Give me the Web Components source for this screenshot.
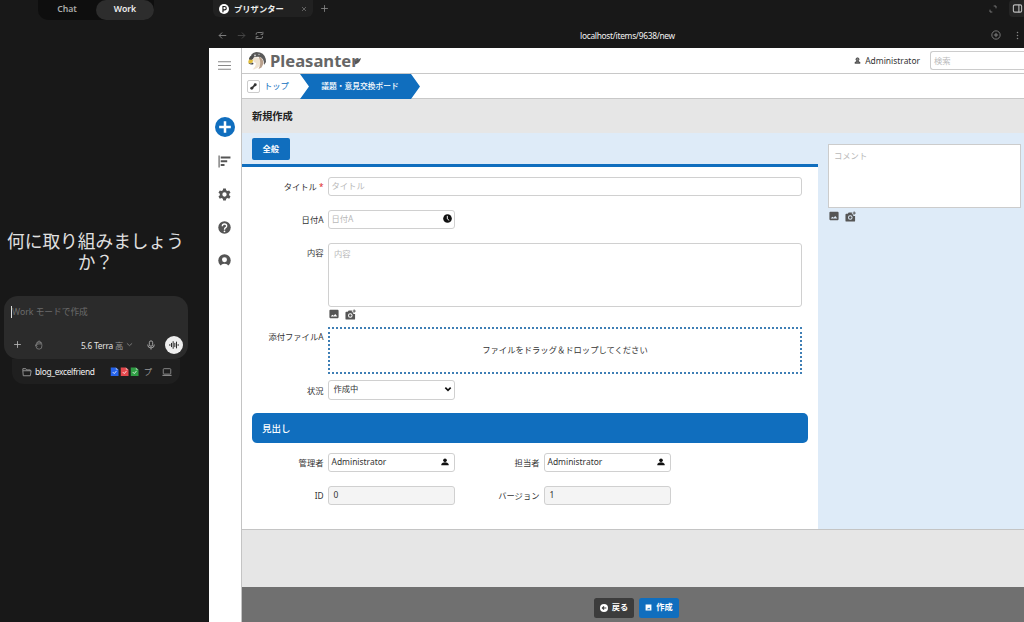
<!DOCTYPE html>
<html lang="ja">
<head>
<meta charset="utf-8">
<title>プリザンター</title>
<style>
  :root {
    --blue: #106ebe;
    --dark: #181818;
    --pale: #deebf8;
    --grey: #e6e6e6;
  }
  body {
    margin: 0;
    width: 1024px;
    height: 622px;
    overflow: hidden;
    display: flex;
    background: var(--dark);
    font-family: "Noto Sans", "Noto Sans CJK JP", sans-serif;
    font-size: 8.3px;
    color: #333;
  }
</style>
</head>
<body>
<chat-panel></chat-panel>
<browser-window>
  <side-nav slot="nav"></side-nav>
  <page-header></page-header>
  <record-editor></record-editor>
  <command-bar></command-bar>
</browser-window>

<script>
// every icon is drawn in a 24x24 box
const ICONS = {
  plus: '<path d="M12 3v18M3 12h18" fill="none" stroke="currentColor" stroke-width="2.2"/>',
  close: '<path d="M4 4l16 16M20 4L4 20" fill="none" stroke="currentColor" stroke-width="2.5"/>',
  back: '<path d="M22 12H3M11 4l-8 8 8 8" fill="none" stroke="currentColor" stroke-width="2.4"/>',
  forward: '<path d="M2 12h19M13 4l8 8-8 8" fill="none" stroke="currentColor" stroke-width="2.4"/>',
  reload: '<path d="M3 10V8q0-4 4-4h12M20 14v2q0 4-4 4H4M15 9h6V2M9 15H3v7" fill="none" stroke="currentColor" stroke-width="2.3"/>',
  hand: '<path d="M6 13V8q0-2 1.500-2T9 8V5q0-2 1.500-2T12 5V4.500q0-2 1.500-2T15 5v2q0-1.500 1.500-1.500T18 7l1 6q1 9-6.500 9T5 16l-2-4q1-2 3 1l2 3M9 8v4M12 5v6M15 6v5" fill="none" stroke="currentColor" stroke-width="1.800"/>',
  down: '<path d="M3 8l9 8 9-8" fill="none" stroke="currentColor" stroke-width="2.8"/>',
  select: '<path d="M4 8l8 8 8-8" fill="none" stroke="currentColor" stroke-width="5"/>',
  mic: '<rect x="8" y="2" width="8" height="13" rx="4" fill="none" stroke="currentColor" stroke-width="2"/><path d="M4 11q0 8 8 8t8-8M12 19v4" fill="none" stroke="currentColor" stroke-width="2"/>',
  wave: '<path d="M2 10v4M6 7v10M10 3v18M14 7v10M18 4v16M22 10v4" fill="none" stroke="currentColor" stroke-width="2.300"/>',
  folder: '<path d="M2 9V4h7l2 3h9v3M2 9h20l-2 12H3z" fill="none" stroke="currentColor" stroke-width="2.200" stroke-linejoin="round"/>',
  laptop: '<rect x="3" y="4" width="18" height="13" rx="2" fill="none" stroke="currentColor" stroke-width="2"/><path d="M1 20h22" stroke="currentColor" stroke-width="2.500"/>',
  doc: '<path d="M2 1h13l7 6v16H2z" fill="currentColor"/><path d="M15 1v6h7z" fill="#fff" opacity=".5"/><path d="M7 13l4 4 6-7" fill="none" stroke="#fff" stroke-width="2.500" opacity=".8"/>',
  expand: '<path d="M14 3h7v7M10 21H3v-7" fill="none" stroke="currentColor" stroke-width="2.400"/>',
  panel: '<rect x="3" y="4" width="18" height="16" rx="3" fill="none" stroke="currentColor" stroke-width="2.400"/><path d="M15 4v16" stroke="currentColor" stroke-width="2.400"/>',
  addCircle: '<circle cx="12" cy="12" r="10" fill="none" stroke="currentColor" stroke-width="2"/><path d="M12 7v10M7 12h10" stroke="currentColor" stroke-width="2.200"/>',
  dots: '<circle cx="12" cy="4" r="2" fill="currentColor"/><circle cx="12" cy="12" r="2" fill="currentColor"/><circle cx="12" cy="20" r="2" fill="currentColor"/>',
  menu: '<path d="M0 5h24M0 12h24M0 19h24" stroke="currentColor" stroke-width="2"/>',
  plusDisc: '<circle cx="12" cy="12" r="12" fill="currentColor"/><path d="M12 5v14M5 12h14" stroke="#fff" stroke-width="3"/>',
  chart: '<path d="M2 1v22" stroke="currentColor" stroke-width="2"/><path d="M5 4.500h18M5 11.500h12M5 18.500h7" stroke="currentColor" stroke-width="3.500"/>',
  gear: '<path fill="currentColor" fill-rule="evenodd" d="M9.500 1h5l.6 3.200 2.400 1.400 3.200-1.200 2.400 4.200-2.500 2.200v2.500l2.500 2.200-2.400 4.200-3.200-1.200-2.400 1.400-.6 3.300h-5l-.6-3.300-2.400-1.400-3.200 1.200-2.400-4.200 2.500-2.200v-2.500L.9 8.600l2.400-4.200 3.200 1.200 2.400-1.400zM12 8a4 4 0 100 8 4 4 0 000-8z"/>',
  help: '<circle cx="12" cy="12" r="11.500" fill="currentColor"/><path d="M8 9.500q0-4 4-4t4 3.500q0 2-2 3.300T12 16" fill="none" stroke="#fff" stroke-width="2.500"/><circle cx="12" cy="19" r="1.600" fill="#fff"/>',
  account: '<circle cx="12" cy="12" r="11.500" fill="currentColor"/><circle cx="12" cy="10.500" r="4.600" fill="#fff"/><path d="M5 24q0-6 7-6t7 6z" fill="#fff"/>',
  user: '<circle cx="12" cy="7" r="5.500" fill="currentColor"/><path d="M1 22v-4q3-5 11-5t11 5v4z" fill="currentColor"/>',
  userLine: '<circle cx="12" cy="8" r="5" fill="#888" stroke="currentColor" stroke-width="3"/><path d="M3 21q1-6 9-6t9 6z" fill="#888" stroke="currentColor" stroke-width="3"/>',
  clock: '<circle cx="12" cy="12" r="11.500" fill="currentColor"/><path d="M11.500 5v8l5 4" fill="none" stroke="#fff" stroke-width="2.500"/>',
  image: '<path fill="currentColor" fill-rule="evenodd" d="M3 2h18q2 0 2 2v16q0 2-2 2H3q-2 0-2-2V4q0-2 2-2zM4 18h16l-5-6-4 4-3-2z"/>',
  camera: '<path fill="currentColor" fill-rule="evenodd" d="M3 6h3l2-3h7v4h3v4h4v10q0 2-2 2H3q-2 0-2-2V8q0-2 2-2zM11.500 9a5 5 0 100 10 5 5 0 000-10z"/><circle cx="11.500" cy="14" r="2.800" fill="currentColor"/><path d="M20 1v7M16.500 4.500h7" stroke="currentColor" stroke-width="2"/>',
  link: '<path d="M5 19L19 5" stroke="currentColor" stroke-width="6"/><circle cx="6" cy="18" r="5" fill="currentColor"/><circle cx="18" cy="6" r="5" fill="currentColor"/>',
  backDisc: '<circle cx="12" cy="12" r="12" fill="#fff"/><path d="M19 12H8M12 7l-5 5 5 5" fill="none" stroke="#3c3c3c" stroke-width="3.500"/>',
  save: '<path fill="currentColor" fill-rule="evenodd" d="M2 2h20v20H2zM6 18h12l-4-6-4 4-2-1z"/>',
  site: '<circle cx="12" cy="12" r="12" fill="#fff"/><path d="M9.500 20V6H13q4.500 0 4.500 4T13 14H9.500" fill="none" stroke="#181818" stroke-width="2.700"/>'
};

function define(name, html) {
  customElements.define(name, class extends HTMLElement {
    constructor() {
      super();
      this.attachShadow({ mode: "open" }).innerHTML = html;
    }
  });
}

// <app-icon name="plus" size="10">
class AppIcon extends HTMLElement {
  connectedCallback() {
    const size = this.getAttribute("size") || 10;
    const shadow = this.shadowRoot || this.attachShadow({ mode: "open" });
    shadow.innerHTML = `
      <style>
        :host { display: block; flex: none; width: ${size}px; height: ${size}px; }
        svg { display: block; }
      </style>
      <svg width="${size}" height="${size}" viewBox="0 0 24 24">${ICONS[this.getAttribute("name")]}</svg>`;
  }
}
customElements.define("app-icon", AppIcon);

// label to the left of a control
class FormField extends HTMLElement {
  connectedCallback() {
    const required = this.hasAttribute("required") ? "<b>*</b>" : "";
    this.attachShadow({ mode: "open" }).innerHTML = `
      <style>
        :host { display: flex; }
        label { width: 72px; padding: 4.500px 4.500px 0 0; text-align: right; line-height: 12px; white-space: nowrap; flex: none; }
        b { color: #d22; margin-left: 2px; font-weight: 400; }
      </style>
      <label>${this.getAttribute("label")}${required}</label>
      <slot></slot>`;
  }
}
customElements.define("form-field", FormField);

// attributes: placeholder, value, icon, wide, area, readonly, indent
class TextBox extends HTMLElement {
  connectedCallback() {
    const value = this.getAttribute("value");
    const icon = this.getAttribute("icon");
    this.attachShadow({ mode: "open" }).innerHTML = `
      <style>
        :host {
          display: flex; justify-content: space-between; align-items: center;
          box-sizing: border-box; width: 127px; height: 19.500px; padding: 0 2px 1px 2.500px;
          border: 1px solid #d0d0d0; border-radius: 3px; background: #fff;
          line-height: 12px; flex: none;
        }
        :host([wide]) { width: 474px; }
        :host([area]) { height: 64px; align-items: flex-start; padding: 4px 5px 0; }
        :host([indent]) { padding-left: 4.500px; }
        :host([readonly]) { background: #f4f4f4; }
        .hint { color: #b8b8b8; }
        .latin { font-size: 8.450px; }
        app-icon { color: #111; }
        app-icon[name="user"] { margin-right: 3px; }
      </style>
      ${value ? `<span class="${/^[\x20-\x7e]+$/.test(value) ? "latin" : ""}">${value}</span>`
              : `<span class="hint">${this.getAttribute("placeholder")}</span>`}
      ${icon ? `<app-icon name="${icon}" size="${icon === "clock" ? 9 : 8}"></app-icon>` : ""}`;
  }
}
customElements.define("text-box", TextBox);

define("image-tools", `
  <style>
    :host { display: flex; gap: 6px; color: #555; align-items: center; height: 11px; padding-left: .5px; }
  </style>
  <app-icon name="image" size="10"></app-icon>
  <app-icon name="camera" size="11"></app-icon>`);

define("chat-panel", `
  <style>
    :host { display: flex; flex-direction: column; width: 208px; height: 622px; flex: none; background: #181818; color: #ddd; }
    .switch { display: flex; width: 116px; height: 20px; margin-left: 38px; border-radius: 0 0 10px 10px; background: #0e0e0e; font-weight: 600; font-size: 8.700px; line-height: 19px; text-align: center; }
    .switch span { width: 58px; color: #aaa; }
    .switch .on { background: #2d2d2d; border-radius: 10px; color: #eee; }
    h1 { margin: 212px 0 0; width: 191px; height: 42px; font: 400 17.700px/21px "Liberation Sans", "Noto Sans CJK JP", sans-serif; text-align: center; color: #e0e0e0; }
    .composer { box-sizing: border-box; width: 184px; height: 63px; margin: 22px 0 0 4px; padding: 9px 5px 5px 7px; border-radius: 14px; background: #2b2b2b; display: flex; flex-direction: column; justify-content: space-between; }
    .prompt { display: flex; align-items: center; height: 13px; color: #6c6c6c; font-size: 8.700px; line-height: 12px; }
    .caret { width: 1px; height: 12px; background: #ddd; }
    .tools { display: flex; align-items: center; height: 19px; color: #bbb; padding-left: 2px; }
    .hand { margin-left: 12px; color: #888; }
    .model { margin-left: auto; color: #e4e4e4; font-size: 8.400px; letter-spacing: -.25px; }
    .model i { font-style: normal; color: #999; }
    .chev { margin: 0 13px 0 3px; color: #888; }
    .voice { display: flex; align-items: center; justify-content: center; width: 18px; height: 18px; margin-left: 9px; border-radius: 50%; background: #eee; color: #222; }
    .context { box-sizing: border-box; display: flex; align-items: center; width: 168px; height: 25px; margin-left: 12px; padding: 0 8px 0 10px; border-radius: 0 0 12px 12px; background: #1f1f1f; color: #999; font-size: 8.300px; }
    .repo { margin: 0 auto 0 3px; color: #f2f2f2; font-size: 8.400px; letter-spacing: -.3px; }
    .docs { display: flex; gap: 1px; margin-right: 4px; }
    .project { padding-bottom: 2px; }
    .laptop { margin-left: 10px; }
  </style>
  <div class="switch"><span>Chat</span><span class="on">Work</span></div>
  <h1>何に取り組みましょう<br>か？</h1>
  <div class="composer">
    <div class="prompt"><span class="caret"></span><span>Work モードで作成</span></div>
    <div class="tools">
      <app-icon name="plus" size="9"></app-icon>
      <app-icon class="hand" name="hand" size="10"></app-icon>
      <span class="model">5.6 Terra <i>高</i></span>
      <app-icon class="chev" name="down" size="7"></app-icon>
      <app-icon name="mic" size="10"></app-icon>
      <span class="voice"><app-icon name="wave" size="10"></app-icon></span>
    </div>
  </div>
  <div class="context">
    <app-icon name="folder" size="10"></app-icon>
    <span class="repo">blog_excelfriend</span>
    <span class="docs">
      <app-icon name="doc" size="9.300" style="color:#2563eb"></app-icon>
      <app-icon name="doc" size="9.300" style="color:#e5484d"></app-icon>
      <app-icon name="doc" size="9.300" style="color:#2f9e44"></app-icon>
    </span>
    <span class="project">プ</span>
    <app-icon class="laptop" name="laptop" size="10"></app-icon>
  </div>`);

define("browser-window", `
  <style>
    :host { display: flex; flex-direction: column; width: 816px; height: 622px; }
    .tabs, .address { display: flex; align-items: center; flex: none; color: #888; }
    .tabs { height: 17px; padding: 0 1px 0 5px; }
    .tab { box-sizing: border-box; display: flex; align-items: center; width: 100px; height: 17px; padding: 0 6px 0 6px; border-radius: 0 0 6px 6px; background: #212121; color: #eee; font-weight: 600; }
    .tab span { margin: 0 auto 0 5px; padding-bottom: 2px; }
    .tab .x { color: #888; }
    .new { margin-left: 7px; }
    .right { display: flex; align-items: center; gap: 12px; margin-left: auto; }
    .panel { display: flex; align-items: center; justify-content: center; width: 17px; height: 17px; border-radius: 4px; background: #252525; color: #bbb; margin-right: -3px; }
    .address { height: 31px; box-sizing: border-box; padding: 5px 2px 0 10px; }
    .go { display: flex; gap: 9.500px; width: 120px; }
    .go :nth-child(2) { color: #4a4a4a; }
    .url { flex: 1; text-align: center; color: #f2f2f2; font-size: 8.400px; letter-spacing: -.3px; padding: 0 74px 0 0; }
    .body { display: flex; flex: 1; margin-left: 1px; background: #fff; }
    main { display: flex; flex-direction: column; width: 782px; }
  </style>
  <div class="tabs">
    <div class="tab"><app-icon name="site" size="10"></app-icon><span>プリザンター</span><app-icon class="x" name="close" size="6"></app-icon></div>
    <app-icon class="new" name="plus" size="9"></app-icon>
    <div class="right"><app-icon name="expand" size="8"></app-icon><div class="panel"><app-icon name="panel" size="11"></app-icon></div></div>
  </div>
  <div class="address">
    <div class="go"><app-icon name="back" size="9"></app-icon><app-icon name="forward" size="9"></app-icon><app-icon name="reload" size="9"></app-icon></div>
    <span class="url">localhost/items/9638/new</span>
    <div class="right"><app-icon name="addCircle" size="10"></app-icon><app-icon name="dots" size="9"></app-icon></div>
  </div>
  <div class="body"><slot name="nav"></slot><main><slot></slot></main></div>`);

define("side-nav", `
  <style>
    :host { display: flex; flex-direction: column; align-items: center; box-sizing: border-box; width: 33px; height: 574px; padding-right: .5px; border-right: 1px solid #c4c4c4; color: #555; flex: none; }
    .menu { margin-top: 10.500px; color: #888; }
    .add { margin-top: 45px; color: var(--blue); }
    .chart { margin-top: 18px; }
    .rest { display: flex; flex-direction: column; gap: 20px; margin-top: 20px; }
  </style>
  <app-icon class="menu" name="menu" size="13"></app-icon>
  <app-icon class="add" name="plusDisc" size="20"></app-icon>
  <app-icon class="chart" name="chart" size="13"></app-icon>
  <div class="rest">
    <app-icon name="gear" size="13"></app-icon>
    <app-icon name="help" size="13"></app-icon>
    <app-icon name="account" size="13"></app-icon>
  </div>`);

define("brand-logo", `
  <style>
    :host { display: flex; align-items: center; gap: 3px; }
    .name span { font: 700 16.600px/24px "Noto Sans", sans-serif; color: #666; }
    .name { display: flex; align-items: center; }
    .name svg { margin: 1px 0 0 -3.500px; }
  </style>
  <svg width="20" height="20" viewBox="0 0 40 40">
    <path d="M8 8Q14-1 26 3q12 4 12 19l-4 6q1-12-8-16-8-2-14 2z" fill="#5a5a5a"/>
    <path d="M12 14q9-4 15 2 4 6-1 13-5 7-15 8 7-6 7-13-7-1-6-10z" fill="#efe3d2"/>
    <path d="M23 11q9 2 10 14l-4 8-6 3q7-12 0-25z" fill="#b9a08c"/>
    <path d="M4 15q3-8 10-6l-2 7-7 5z" fill="#4d4d4d"/>
    <path d="M4 17l8 1-1 5-7 3q-3-4 0-9z" fill="#e0bd3a"/>
    <path d="M3 24q5 2 9-1l1 3q-5 3-10-2z" fill="#444"/>
    <circle cx="16" cy="9" r="1.800" fill="#ddd"/><circle cx="24" cy="7" r="1.500" fill="#bbb"/>
  </svg>
  <div class="name"><span>Pleasanter</span><svg width="6" height="7" viewBox="0 0 6 7"><path d="M0 3Q2 2 6 0 5 5 0 6.500z" fill="#555"/></svg></div>`);

define("page-header", `
  <style>
    :host { display: block; flex: none; }
    .top { display: flex; align-items: center; height: 25px; border-bottom: 1px solid #c8c8c8; padding-left: 5px; }
    .user { display: flex; align-items: center; gap: 4px; margin-left: auto; font-size: 8.450px; }
    .search { box-sizing: border-box; width: 94px; height: 19px; margin-left: 10px; padding-left: 3px; border: 1px solid #ccc; border-right: 0; border-radius: 3px 0 0 3px; color: #bbb; line-height: 17px; }
    .crumbs { display: flex; align-items: center; height: 24px; border-bottom: 1px solid #c8c8c8; padding-left: 5px; }
    .pin { display: flex; align-items: center; justify-content: center; box-sizing: border-box; width: 13px; height: 13px; border: 1px solid #ccc; border-radius: 2px; color: #333; }
    a { margin-left: 4px; width: 36px; padding-bottom: 2px; color: var(--blue); }
    .here { width: 120px; height: 25px; margin-bottom: -1px; background: var(--blue); clip-path: polygon(0 0, 111px 0, 100% 50%, 111px 100%, 0 100%, 9px 50%); color: #fff; text-align: center; line-height: 24px; font-size: 7.750px; font-weight: 500; }
  </style>
  <div class="top">
    <brand-logo></brand-logo>
    <div class="user"><app-icon name="userLine" size="7"></app-icon><span>Administrator</span></div>
    <div class="search">検索</div>
  </div>
  <div class="crumbs">
    <div class="pin"><app-icon name="link" size="7"></app-icon></div>
    <a>トップ</a>
    <div class="here">議題・意見交換ボード</div>
  </div>`);

define("record-editor", `
  <style>
    :host { display: block; flex: none; }
    h2 { margin: 0; height: 34px; padding-left: 10px; background: var(--grey); font-size: 10.200px; font-weight: 700; line-height: 35px; color: #222; }
    .cols { display: flex; height: 396px; background: var(--pale); border-bottom: 1px solid #c4c4c4; }
    .left { display: flex; flex-direction: column; width: 576px; }
    .tabs { padding: 5px 0 0 10px; border-bottom: 3px solid var(--blue); box-sizing: border-box; height: 33.500px; }
    .tab { width: 37.500px; height: 22px; border-radius: 2px; background: var(--blue); color: #fff; font-weight: 700; line-height: 21px; text-align: center; }
    form { flex: 1; padding: 10px 10px 0 10px; margin: 0; background: #fff; }
    form-field { margin: 0 0 13.700px -.5px; }
    .stack { display: flex; flex-direction: column; }
    .stack image-tools { margin-top: 2px; }
    .body { margin-bottom: 7px; }
    .drop { box-sizing: border-box; width: 474px; height: 47.500px; border: 2px dotted #3f7fb5; line-height: 42px; text-align: center; }
    .file { margin-bottom: 5.700px; }
    .section { width: 556px; height: 30px; box-sizing: border-box; margin-bottom: 9.300px; padding-left: 10px; border-radius: 5px; background: var(--blue); color: #fff; font-size: 9.500px; font-weight: 500; line-height: 31px; }
    .pair { display: grid; grid-template-columns: 216px 216px; }
    .comment { padding: 11px 0 0 10px; }
    .box { box-sizing: border-box; width: 193px; height: 64px; margin-bottom: 2.500px; padding: 5px; border: 1px solid #ccc; background: #fff; color: #b8b8b8; line-height: 12px; }
  </style>
  <h2>新規作成</h2>
  <div class="cols">
    <div class="left">
      <div class="tabs"><div class="tab">全般</div></div>
      <form>
        <form-field label="タイトル" required><text-box wide placeholder="タイトル"></text-box></form-field>
        <form-field label="日付A"><text-box placeholder="日付A" icon="clock"></text-box></form-field>
        <form-field class="body" label="内容"><div class="stack"><text-box wide area placeholder="内容"></text-box><image-tools></image-tools></div></form-field>
        <form-field class="file" label="添付ファイルA"><div class="drop">ファイルをドラッグ＆ドロップしてください</div></form-field>
        <form-field label="状況"><text-box indent value="作成中" icon="select"></text-box></form-field>
        <div class="section">見出し</div>
        <div class="pair">
          <form-field label="管理者"><text-box value="Administrator" icon="user"></text-box></form-field>
          <form-field label="担当者"><text-box value="Administrator" icon="user"></text-box></form-field>
          <form-field label="ID"><text-box indent readonly value="0"></text-box></form-field>
          <form-field label="バージョン"><text-box indent readonly value="1"></text-box></form-field>
        </div>
      </form>
    </div>
    <div class="comment">
      <div class="box">コメント</div>
      <image-tools></image-tools>
    </div>
  </div>`);

define("command-bar", `
  <style>
    :host { display: flex; flex-direction: column; flex: 1; background: var(--grey); }
    .bar { display: flex; justify-content: center; gap: 5px; box-sizing: border-box; height: 35px; margin-top: auto; padding: 11px 0 0 7px; background: #707070; }
    button { display: flex; align-items: center; justify-content: center; gap: 4px; box-sizing: border-box; width: 40px; height: 19.500px; padding: 0; border: 0; border-radius: 2.500px; background: #3c3c3c; color: #fff; font: inherit; font-size: 8.200px; font-weight: 700; line-height: 12px; }
    span { padding-bottom: 1px; }
    .create { background: var(--blue); }
  </style>
  <div class="bar">
    <button><app-icon name="backDisc" size="8"></app-icon><span>戻る</span></button>
    <button class="create"><app-icon name="save" size="7"></app-icon><span>作成</span></button>
  </div>`);
</script>
</body>
</html>
